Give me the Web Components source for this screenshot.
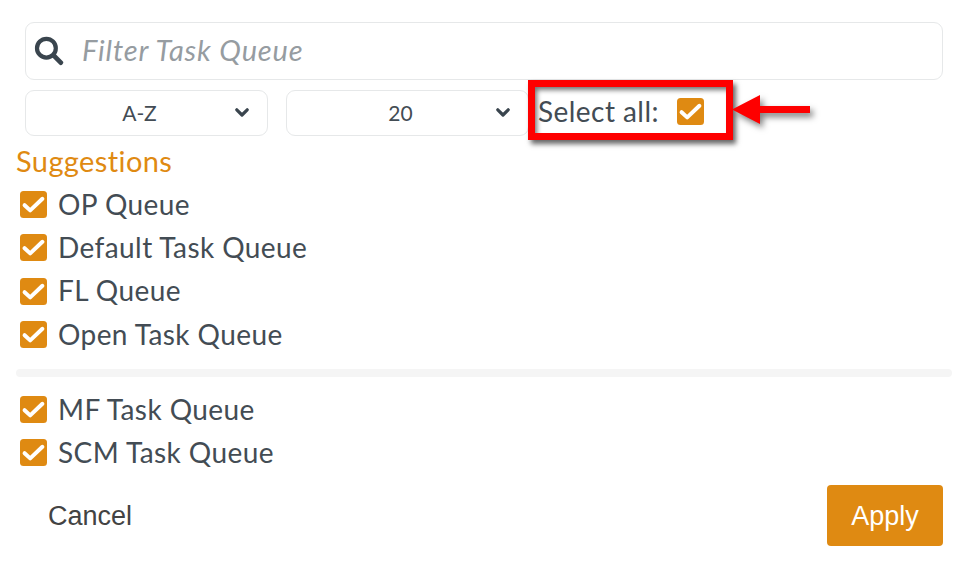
<!DOCTYPE html>
<html>
<head>
<meta charset="utf-8">
<style>
    html, body { margin: 0; background: #fff; }
    body { width: 970px; height: 570px; overflow: hidden; font-family: "Lato", "Liberation Sans", sans-serif; color: #434c54; }
</style>
</head>
<body>
<queue-panel>
    <search-box slot="search" placeholder="Filter Task Queue"></search-box>
    <sort-select slot="sort" value="A-Z"></sort-select>
    <sort-select slot="sort" value="20"></sort-select>
    <queue-check slot="suggested">OP Queue</queue-check>
    <queue-check slot="suggested">Default Task Queue</queue-check>
    <queue-check slot="suggested">FL Queue</queue-check>
    <queue-check slot="suggested">Open Task Queue</queue-check>
    <queue-check slot="other">MF Task Queue</queue-check>
    <queue-check slot="other">SCM Task Queue</queue-check>
</queue-panel>

<script>
const checkSvg = `<svg viewBox="0 0 27 27" width="27" height="27" style="display:block">
    <rect width="27" height="27" rx="3.5" fill="#df8a12"/>
    <path d="M4.6 14.2l5.6 5.2L22.4 7.8" fill="none" stroke="#fff" stroke-width="4" stroke-linecap="round" stroke-linejoin="round"/>
</svg>`;

class SearchBox extends HTMLElement {
    constructor() {
        super();
        const shadow = this.attachShadow({ mode: 'open' });
        shadow.innerHTML = `
            <style>
                :host { display: block; }
                .box {
                    display: flex;
                    align-items: center;
                    height: 58px;
                    box-sizing: border-box;
                    padding-left: 8px;
                    border: 1px solid #e6e8e9;
                    border-radius: 9px;
                }
                svg { display: block; flex: none; margin-right: 18px; }
                span { margin-bottom: 4px; font-size: 29px; font-style: italic; color: #969ca1; letter-spacing: 0.85px; }
            </style>
            <div class="box">
                <svg width="30" height="30" viewBox="0 0 30 30">
                    <circle cx="12.4" cy="12.2" r="9.4" fill="none" stroke="#3a454e" stroke-width="4.2"/>
                    <path d="M19.6 19.4l7.2 7.2" stroke="#3a454e" stroke-width="4.8" stroke-linecap="round"/>
                </svg>
                <span>${this.getAttribute('placeholder')}</span>
            </div>
        `;
    }
}

class SortSelect extends HTMLElement {
    constructor() {
        super();
        const shadow = this.attachShadow({ mode: 'open' });
        shadow.innerHTML = `
            <style>
                :host { display: block; width: 243px; flex: none; }
                .box {
                    position: relative;
                    display: flex;
                    align-items: center;
                    justify-content: center;
                    height: 46px;
                    box-sizing: border-box;
                    padding: 0 14px 2px 0;
                    border: 1px solid #e6e8e9;
                    border-radius: 9px;
                    font-size: 21px;
                    color: #434c54;
                }
                svg { position: absolute; right: 18px; top: 17px; }
            </style>
            <div class="box">
                <span>${this.getAttribute('value')}</span>
                <svg width="14" height="10" viewBox="0 0 14 10">
                    <path d="M1.8 1.8L7 7l5.2-5.2" fill="none" stroke="#3a454e" stroke-width="3.2" stroke-linecap="round" stroke-linejoin="round"/>
                </svg>
            </div>
        `;
    }
}

class QueueCheck extends HTMLElement {
    constructor() {
        super();
        const shadow = this.attachShadow({ mode: 'open' });
        shadow.innerHTML = `
            <style>
                :host { display: flex; align-items: center; height: 43.3px; padding-left: 20px; font-size: 28px; letter-spacing: 0.42px; color: #434c54; }
                .box { flex: none; margin-right: 11px; }
                .label { margin-bottom: 2px; }
            </style>
            <span class="box">${checkSvg}</span>
            <span class="label"><slot></slot></span>
        `;
    }
}

class QueuePanel extends HTMLElement {
    constructor() {
        super();
        const shadow = this.attachShadow({ mode: 'open' });
        shadow.innerHTML = `
            <style>
                :host { display: block; position: relative; width: 970px; height: 570px; box-sizing: border-box; padding: 22px 27px 0 25px; }
                .controls { display: flex; align-items: flex-start; gap: 18px; margin-top: 10px; height: 46px; }
                .select-all { display: flex; align-items: center; height: 41px; margin-left: -9px; font-size: 28px; letter-spacing: 0.45px; color: #434c54; white-space: nowrap; }
                .select-all .box { margin-left: 18px; margin-top: 2px; }
                h4 { margin: 7px 0 0 -9px; font-size: 29px; line-height: 36px; font-weight: 400; letter-spacing: 0.4px; color: #df8a12; }
                .list { margin-left: -25px; }
                .suggested { margin-top: 4px; }
                hr { height: 8px; border: 0; margin: 13px -9px 11px -9px; background: #f5f5f5; border-radius: 4px; }
                .other { display: flex; flex-direction: column; height: 86px; }
                .footer { display: flex; align-items: center; justify-content: space-between; margin-top: 11px; }
                .cancel { margin: 2px 0 0 23px; font: 27px "Liberation Sans", sans-serif; color: #434343; }
                .apply {
                    width: 116px; height: 61px; box-sizing: border-box; padding-top: 2px; display: flex; align-items: center; justify-content: center;
                    background: #df8a12; border-radius: 4px; color: #fff; font: 27px "Liberation Sans", sans-serif;
                }
                .marker {
                    position: absolute; left: 528px; top: 80px; width: 205px; height: 60px; box-sizing: border-box;
                    border: 7px solid #fe0000; box-shadow: 3px 4px 5px rgba(0,0,0,.6), inset 3px 4px 5px -1px rgba(0,0,0,.55);
                }
                .arrow { position: absolute; left: 730px; top: 92px; filter: drop-shadow(3px 4px 3px rgba(0,0,0,.5)); }
            </style>
            <slot name="search"></slot>
            <div class="controls">
                <slot name="sort"></slot>
                <div class="select-all"><span>Select all:</span><span class="box">${checkSvg}</span></div>
            </div>
            <h4>Suggestions</h4>
            <div class="list suggested"><slot name="suggested"></slot></div>
            <hr>
            <div class="list other"><slot name="other"></slot></div>
            <div class="footer">
                <span class="cancel">Cancel</span>
                <span class="apply">Apply</span>
            </div>
            <div class="marker"></div>
            <svg class="arrow" width="84" height="40" viewBox="0 0 84 40">
                <path d="M2 17.5L30 3v11h50v7H30v11z" fill="#fe0000"/>
            </svg>
        `;
    }
}

customElements.define('search-box', SearchBox);
customElements.define('sort-select', SortSelect);
customElements.define('queue-check', QueueCheck);
customElements.define('queue-panel', QueuePanel);
</script>
</body>
</html>
